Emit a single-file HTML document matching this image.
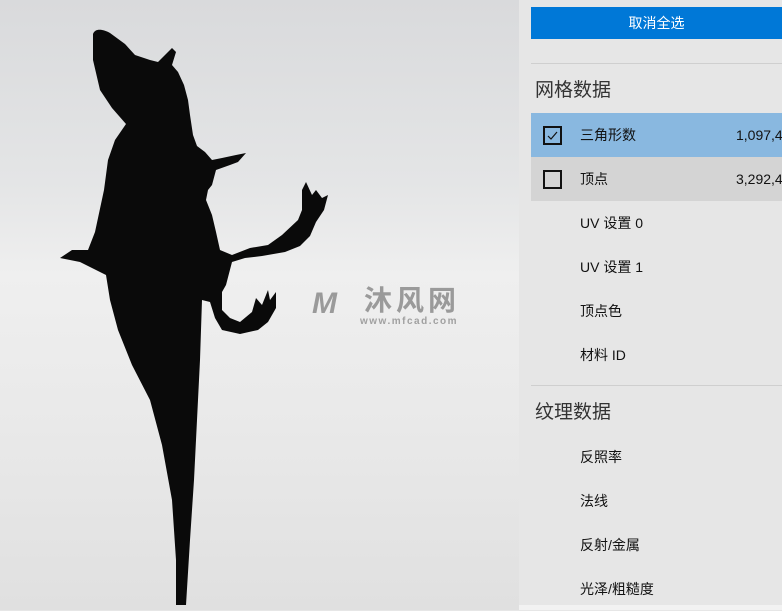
<!DOCTYPE html>
<html><head><meta charset="utf-8"><style>
*{margin:0;padding:0;box-sizing:border-box}
body{width:782px;height:610px;overflow:hidden;position:relative;font-family:"Liberation Sans","Noto Sans CJK SC",sans-serif;background:#e6e6e6}
#vp{position:absolute;left:0;top:0;width:519px;height:610px;background:linear-gradient(#d9dadc 0%,#e4e5e6 30%,#efefef 45%,#e9e9e9 70%,#e0e0e0 100%)}
#panel{position:absolute;left:519px;top:0;width:263px;height:610px;background:#e6e6e6}
.btn{position:absolute;left:12px;top:7px;width:251px;height:32px;background:#0078d7;color:#fff;font-size:14px;line-height:32px;text-align:center}
.hr{position:absolute;left:12px;width:251px;height:1px;background:#cfcfcf}
.h{position:absolute;left:16px;font-size:19px;color:#333}
.row{position:absolute;left:12px;width:251px;height:44px;font-size:14px;color:#111;line-height:44px}
.row .t{position:absolute;left:49px}
.row .n{position:absolute;left:205px}
.cb{position:absolute;left:12px;top:13px;width:19px;height:19px;border:2px solid #111}
</style></head><body>
<div id="vp">
<svg width="519" height="610" style="position:absolute;left:0;top:0">
<path fill="#0a0a0a" d="M93,34 C95,28 103,29 110,33 L125,44 L135,55 L150,60 L158,62 L172,48 L176,52 L172,65 L178,72 L184,85 L188,100 L190,115 L193,135 L197,146 L205,152 L212,160 L222,158 L236,155 L246,153 L238,162 L230,165 L216,170 L212,185 L208,190 L206,200 L212,215 L216,232 L220,250 L232,255 L250,248 L268,245 L282,235 L298,220 L302,210 L302,190 L306,182 L312,195 L316,190 L322,198 L328,195 L324,210 L316,222 L310,236 L300,246 L285,252 L262,256 L245,258 L232,262 L226,285 L222,292 L222,310 L230,318 L240,322 L252,312 L256,298 L262,305 L268,290 L270,300 L276,292 L276,308 L268,322 L258,330 L240,334 L222,330 L215,318 L210,302 L202,300 L200,360 L197,420 L194,480 L190,540 L186,605 L176,605 L176,560 L172,500 L162,445 L150,400 L132,365 L118,330 L110,300 L106,275 L92,268 L80,262 L60,258 L72,250 L88,250 L95,232 L104,190 L108,160 L115,140 L126,124 L112,108 L100,90 L93,60 Z"/>
</svg>
<div style="position:absolute;left:312px;top:287px;color:#9a9a9a;font-weight:bold;font-size:30px;font-style:italic;line-height:34px">M</div>
<div style="position:absolute;left:364px;top:284px;color:#9a9a9a;font-weight:bold;font-size:28px;font-family:'Noto Sans CJK SC',sans-serif;letter-spacing:4px;line-height:30px">沐风网</div>
<div style="position:absolute;left:360px;top:316px;color:#a0a0a0;font-weight:bold;font-size:10px;letter-spacing:1.5px;line-height:12px">www.mfcad.com</div>
</div>
<div id="panel">
<div class="btn">取消全选</div>
<div class="hr" style="top:63px"></div>
<div class="h" style="top:75px">网格数据</div>
<div class="row" style="top:113px;background:#89b8e0"><div class="cb"><svg width="15" height="15" style="position:absolute;left:0;top:0"><path d="M3,8 L6,11 L12,4" stroke="#111" stroke-width="1.2" fill="none"/></svg></div><span class="t">三角形数</span><span class="n">1,097,4</span></div>
<div class="row" style="top:157px;background:#d4d4d4"><div class="cb"></div><span class="t">顶点</span><span class="n">3,292,4</span></div>
<div class="row" style="top:201px"><span class="t">UV 设置 0</span></div>
<div class="row" style="top:245px"><span class="t">UV 设置 1</span></div>
<div class="row" style="top:289px"><span class="t">顶点色</span></div>
<div class="row" style="top:333px"><span class="t">材料 ID</span></div>
<div class="hr" style="top:385px"></div>
<div class="h" style="top:397px">纹理数据</div>
<div class="row" style="top:435px"><span class="t">反照率</span></div>
<div class="row" style="top:479px"><span class="t">法线</span></div>
<div class="row" style="top:523px"><span class="t">反射/金属</span></div>
<div class="row" style="top:567px"><span class="t">光泽/粗糙度</span></div>
<div style="position:absolute;left:0;top:605px;width:263px;height:5px;background:#f2f2f2"></div>
</div>
</body></html>
